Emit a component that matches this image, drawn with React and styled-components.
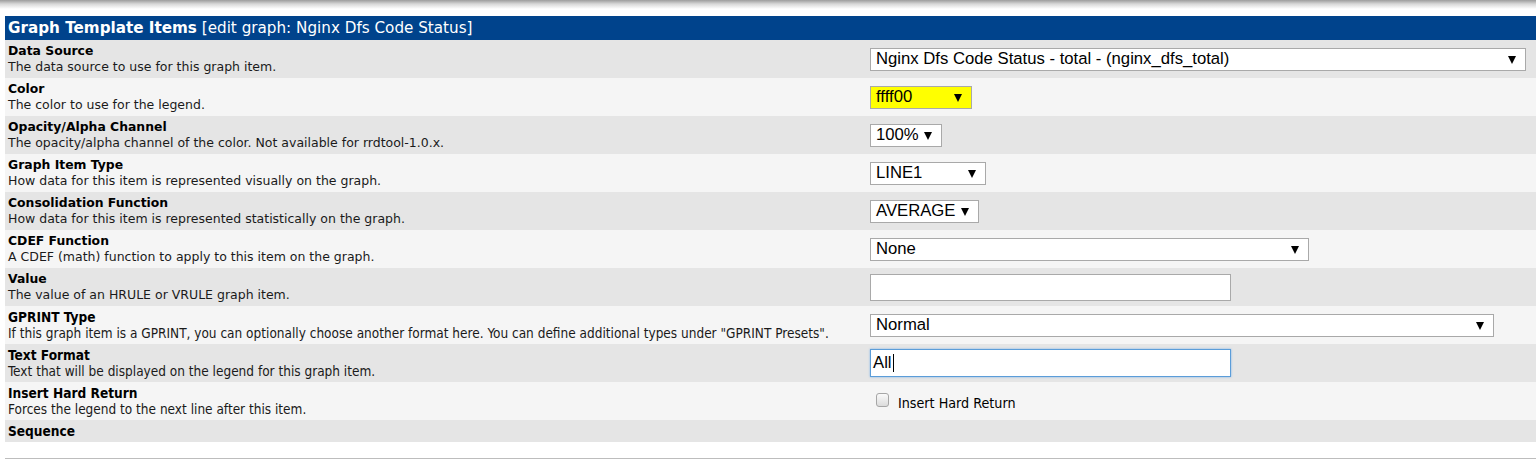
import React from "react";
import styled, { createGlobalStyle, css } from "styled-components";

const Global = createGlobalStyle`
  html, body { margin: 0; padding: 0; background: #fff; }
  body { font-family: "DejaVu Sans", Verdana, sans-serif; }
`;

const Page = styled.div`
  width: 1536px;
  height: 459px;
  overflow: hidden;
  display: flex;
  flex-direction: column;
`;

const TopShade = styled.div`
  height: 9px;
  background: linear-gradient(#9c9c9c, #d8d8d8 45%, #ffffff);
  margin-bottom: 7px;
`;

const Panel = styled.div`
  margin-left: 5px;
  display: flex;
  flex-direction: column;
`;

const Header = styled.div`
  height: 24px;
  background: #00438c;
  color: #fff;
  font-size: 15.2px;
  line-height: 25px;
  padding-left: 3px;
  white-space: nowrap;
`;

const HeaderTitle = styled.b`
  font-weight: bold;
`;

const Row = styled.div`
  display: grid;
  grid-template-columns: 861px 1fr;
  align-items: center;
  background: ${(p) => (p.$alt ? "#f5f5f5" : "#e5e5e5")};
  height: ${(p) => (p.$short ? "22px" : "38px")};
  box-sizing: border-box;
`;

const LabelCell = styled.div`
  padding: 0 3px;
  font-family: ${(p) =>
    p.$narrow
      ? '"DejaVu Sans Condensed", "DejaVu Sans", sans-serif'
      : '"DejaVu Sans", Verdana, sans-serif'};
  ${(p) => p.$narrow && css`font-stretch: condensed;`}
  white-space: nowrap;
`;

const Title = styled.div`
  font-weight: bold;
  font-size: ${(p) => (p.$narrow ? "13.6px" : "12.4px")};
  line-height: 16px;
  color: #000;
`;

const Desc = styled.div`
  font-size: ${(p) => (p.$narrow ? "13.5px" : "12.5px")};
  line-height: 16px;
  color: #1a1a1a;
`;

const ControlCell = styled.div`
  padding-left: 4px;
  display: flex;
  align-items: center;
`;

const SelectBox = styled.div`
  width: ${(p) => p.$w}px;
  height: 23px;
  box-sizing: border-box;
  border: 1px solid #a9a9a9;
  background: ${(p) => p.$bg || "#fff"};
  display: flex;
  align-items: center;
  justify-content: space-between;
  padding: 0 9px 0 5px;
  font-family: "Liberation Sans", Arial, sans-serif;
  font-size: 16.7px;
  color: #000;
  white-space: nowrap;
`;

const Arrow = styled.span`
  width: 0;
  height: 0;
  border-left: 4px solid transparent;
  border-right: 4px solid transparent;
  border-top: 8px solid #000;
  margin-top: 1px;
`;

const TextField = styled.div`
  width: 361px;
  height: ${(p) => (p.$focused ? "28px" : "27px")};
  box-sizing: border-box;
  border: 1px solid ${(p) => (p.$focused ? "#5b9dd9" : "#a9a9a9")};
  ${(p) => p.$focused && css`box-shadow: 0 0 2px #7fb3e8;`}
  background: #fff;
  display: flex;
  align-items: center;
  padding-left: 2px;
  font-family: "Liberation Sans", Arial, sans-serif;
  font-size: 16.7px;
  color: #000;
`;

const Caret = styled.span`
  display: inline-block;
  width: 1px;
  height: 18px;
  background: #000;
  margin-left: 1px;
`;

const CheckLine = styled.label`
  display: flex;
  align-items: center;
  gap: 9px;
  padding-left: 6px;
  margin-top: 3px;
  font-family: "DejaVu Sans Condensed", "DejaVu Sans", sans-serif;
  font-stretch: condensed;
  font-size: 14.2px;
  color: #000;
`;

const CheckBox = styled.span`
  width: 11px;
  height: 12px;
  border: 1px solid #a6a6a6;
  border-radius: 3px;
  background: linear-gradient(#fafafa, #dcdcdc);
  margin-top: -6px;
`;

const BottomRule = styled.div`
  margin: 16px 0 0 5px;
  height: 1px;
  background: #bdbdbd;
`;

function Select({ w, bg, children }) {
  return (
    <SelectBox $w={w} $bg={bg}>
      <span>{children}</span>
      <Arrow />
    </SelectBox>
  );
}

const rows = [
  {
    t: "Data Source",
    d: "The data source to use for this graph item.",
    c: <Select w={656}>Nginx Dfs Code Status - total - (nginx_dfs_total)</Select>,
  },
  { t: "Color", d: "The color to use for the legend.", c: <Select w={102} bg="#ffff00">ffff00</Select> },
  {
    t: "Opacity/Alpha Channel",
    d: "The opacity/alpha channel of the color. Not available for rrdtool-1.0.x.",
    c: <Select w={72}>100%</Select>,
  },
  {
    t: "Graph Item Type",
    d: "How data for this item is represented visually on the graph.",
    c: <Select w={116}>LINE1</Select>,
  },
  {
    t: "Consolidation Function",
    d: "How data for this item is represented statistically on the graph.",
    c: <Select w={109}>AVERAGE</Select>,
  },
  {
    t: "CDEF Function",
    d: "A CDEF (math) function to apply to this item on the graph.",
    c: <Select w={439}>None</Select>,
  },
  { t: "Value", d: "The value of an HRULE or VRULE graph item.", c: <TextField /> },
  {
    t: "GPRINT Type",
    d: 'If this graph item is a GPRINT, you can optionally choose another format here. You can define additional types under "GPRINT Presets".',
    narrow: true,
    c: <Select w={624}>Normal</Select>,
  },
  {
    t: "Text Format",
    d: "Text that will be displayed on the legend for this graph item.",
    narrow: true,
    c: (
      <TextField $focused>
        All
        <Caret />
      </TextField>
    ),
  },
  {
    t: "Insert Hard Return",
    d: "Forces the legend to the next line after this item.",
    narrow: true,
    c: (
      <CheckLine>
        <CheckBox />
        Insert Hard Return
      </CheckLine>
    ),
  },
  { t: "Sequence", narrow: true, short: true },
];

export default function App() {
  return (
    <Page>
      <Global />
      <TopShade />
      <Panel>
        <Header>
          <HeaderTitle>Graph Template Items</HeaderTitle> [edit graph: Nginx Dfs Code Status]
        </Header>
        {rows.map((r, i) => (
          <Row key={r.t} $alt={i % 2 === 1} $short={r.short}>
            <LabelCell $narrow={r.narrow}>
              <Title $narrow={r.narrow}>{r.t}</Title>
              {r.d && <Desc $narrow={r.narrow}>{r.d}</Desc>}
            </LabelCell>
            <ControlCell>{r.c}</ControlCell>
          </Row>
        ))}
      </Panel>
      <BottomRule />
    </Page>
  );
}
